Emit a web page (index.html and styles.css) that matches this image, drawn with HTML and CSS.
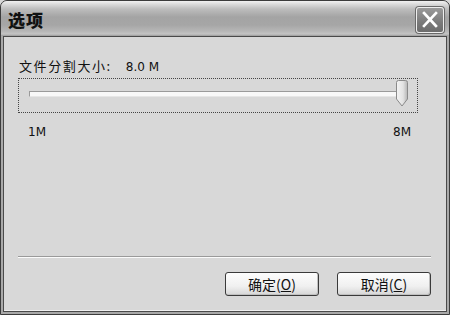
FILE: index.html
```html
<!DOCTYPE html>
<html>
<head>
<meta charset="utf-8">
<link rel="stylesheet" href="styles.css">
</head>
<body>
<div class="window">
  <div class="titlebar">
    <span class="title">选项</span>
    <span class="close">
      <svg width="28" height="26" viewBox="0 0 28 26">
        <path d="M8 6 L20 19 M20 6 L8 19" stroke="#fff" stroke-width="2.6" stroke-linecap="square" fill="none"/>
      </svg>
    </span>
  </div>
  <div class="client">
    <div class="label"><span class="cjk">文件分割大小:</span><span class="value">8.0 M</span></div>
    <div class="slider">
      <div class="track"></div>
      <svg class="thumb" width="14" height="27" viewBox="0 0 14 27">
        <defs>
          <linearGradient id="tg" x1="0" x2="1" y1="0" y2="0">
            <stop offset="0" stop-color="#f4f4f4"/>
            <stop offset="0.6" stop-color="#e2e2e2"/>
            <stop offset="1" stop-color="#b4b4b4"/>
          </linearGradient>
        </defs>
        <path d="M1.5 2.5 Q1.5 0.5 3.5 0.5 L10.5 0.5 Q12.5 0.5 12.5 2.5 L12.5 19 L7 26 L1.5 19 Z" fill="url(#tg)" stroke="#8a8a8a" stroke-width="1"/>
      </svg>
    </div>
    <div class="ticks"><span>1M</span><span>8M</span></div>
    <div class="spacer"></div>
    <div class="sep"></div>
    <div class="buttons">
      <button class="btn">确定(<u>O</u>)</button>
      <button class="btn">取消(<u>C</u>)</button>
    </div>
  </div>
</div>
</body>
</html>
```

FILE: styles.css
```css
html, body {
  margin: 0;
  padding: 0;
  width: 450px;
  height: 315px;
  overflow: hidden;
  background: #d8d8d8;
}
.window {
  box-sizing: border-box;
  width: 450px;
  height: 315px;
  border: 1px solid #3c3c3c;
  border-radius: 7px 7px 0 0;
  background: #a9a9a9;
  display: flex;
  flex-direction: column;
  font-family: "Liberation Sans", "Noto Sans CJK SC", sans-serif;
}
.titlebar {
  height: 35px;
  flex: none;
  display: flex;
  align-items: center;
  justify-content: space-between;
  padding: 0 5px 0 7px;
  border-radius: 6px 6px 0 0;
  background: linear-gradient(to bottom, #f2f2f2 0px, #dcdcdc 3px, #bdbdbd 8px, #a4a4a4 16px, #a6a6a6 24px, #b6b6b6 30px, #c4c4c4 33px, #9a9a9a 35px);
}
.title {
  font-family: "Noto Sans CJK SC", sans-serif;
  font-weight: 900;
  font-size: 17px;
  color: #111;
  letter-spacing: 1px;
  margin-top: 2px;
}
.close {
  width: 28px;
  height: 26px;
  box-sizing: border-box;
  border: 1px solid #eeeeee;
  border-radius: 3px;
  background: linear-gradient(to bottom, #9a9a9a, #7a7a7a 60%, #6c6c6c);
  box-shadow: 0 0 0 1px #6a6a6a;
  display: flex;
  align-items: center;
  justify-content: center;
  margin-top: 2px;
}
.close svg { display: block; margin: -1px; }
.client {
  flex: 1;
  margin: 0 2px 2px 2px;
  border: 1px solid #4a4a4a;
  background: #d8d8d8;
  display: flex;
  flex-direction: column;
  padding: 0 15px 0 14px;
  box-shadow: inset 0 -1px 0 #f0f0f0;
}
.label {
  margin-top: 21px;
  font-size: 13px;
  height: 16px;
  line-height: 16px;
  color: #111;
  padding-left: 1px;
}
.cjk {
  font-family: "Noto Sans CJK SC", sans-serif;
  letter-spacing: 1.6px;
  font-size: 13px;
}
.value {
  margin-left: 14px;
  font-family: "DejaVu Sans", sans-serif;
  font-size: 12px;
}
.slider {
  position: relative;
  margin-top: 4px;
  height: 33px;
  margin-right: 13px;
  border: 1px dotted #444;
}
.track {
  position: absolute;
  left: 10px;
  right: 14px;
  top: 12px;
  height: 4px;
  background: #f8f8f8;
  border-top: 1px solid #9a9a9a;
  border-left: 1px solid #9a9a9a;
  border-bottom: 1px solid #e6e6e6;
}
.thumb {
  position: absolute;
  left: 376px;
  top: 1px;
}
.ticks {
  display: flex;
  justify-content: space-between;
  margin-top: 12px;
  padding: 0 20px 0 10px;
  font-family: "DejaVu Sans", sans-serif;
  font-size: 12px;
  color: #111;
  line-height: 14px;
}
.spacer { flex: 1; }
.sep {
  height: 1px;
  background: #9a9a9a;
  border-bottom: 1px solid #fbfbfb;
}
.buttons {
  display: flex;
  justify-content: flex-end;
  gap: 18px;
  margin-top: 14px;
  margin-bottom: 15px;
}
.btn {
  width: 94px;
  height: 24px;
  box-sizing: border-box;
  border: 1px solid #3a3a3a;
  border-radius: 3px;
  background: linear-gradient(to bottom, #fdfdfd, #f0f0f0 60%, #d6d6d6);
  box-shadow: inset -1px -1px 0 #c0c0c0;
  font-family: "Noto Sans CJK SC", sans-serif;
  font-size: 14px;
  color: #111;
  padding: 0;
  line-height: 20px;
}
.btn u { text-decoration: underline; }
```
